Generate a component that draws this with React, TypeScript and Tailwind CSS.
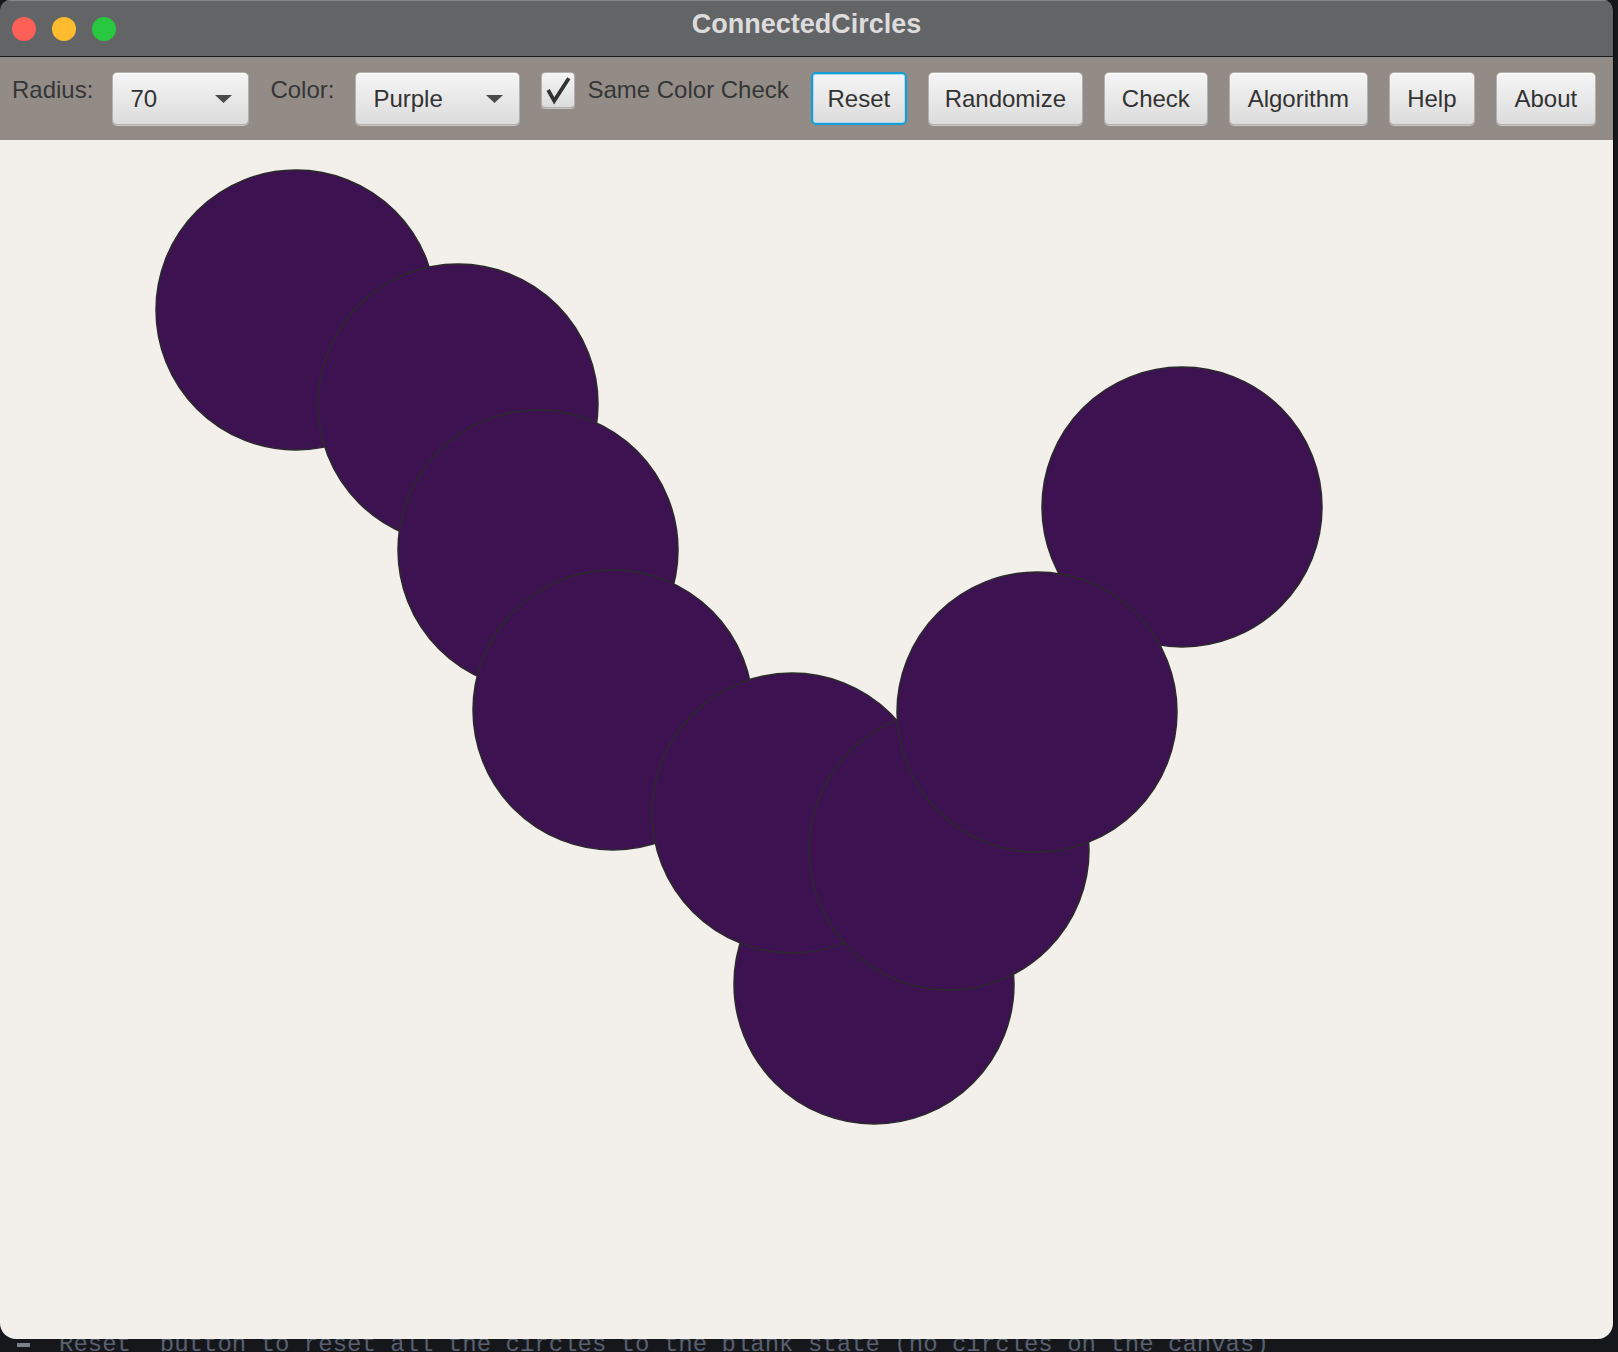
import React from 'react';

type Circle = { x: number; y: number };

// centres in canvas coordinates (canvas starts 140px below the window top)
const CIRCLES: Circle[] = [
  { x: 296, y: 170 },
  { x: 458, y: 264 },
  { x: 538, y: 410 },
  { x: 613, y: 570 },
  { x: 874, y: 844 },
  { x: 792, y: 673 },
  { x: 1182, y: 367 },
  { x: 949, y: 710 },
  { x: 1037, y: 572 },
];

const BUTTONS = [
  { label: 'Reset', width: 'w-[96px]', focused: true },
  { label: 'Randomize', width: 'w-[155px]' },
  { label: 'Check', width: 'w-[104px]' },
  { label: 'Algorithm', width: 'w-[139px]' },
  { label: 'Help', width: 'w-[86px]' },
  { label: 'About', width: 'w-[100px]' },
];

const Caret = () => (
  <svg width="17" height="8" viewBox="0 0 17 8" className="shrink-0">
    <path d="M0 0 L17 0 L8.5 8 Z" fill="#4a4a4a" />
  </svg>
);

const Combo = ({ value, width }: { value: string; width: string }) => (
  <div
    className={`${width} h-[53px] flex items-center justify-between pl-[17px] pr-[16px] rounded-[5px] border border-[#b3b0ad] bg-gradient-to-b from-[#f5f5f5] to-[#dcdcdc] shadow-[0_1px_0_#c9c5c1,inset_0_1px_0_#ffffff]`}
  >
    <span className="leading-[28px] text-[#333333]">{value}</span>
    <Caret />
  </div>
);

const Button = ({ label, width, focused }: { label: string; width: string; focused?: boolean }) => (
  <button
    type="button"
    className={`${width} h-[53px] flex items-center justify-center rounded-[5px] leading-[28px] text-[#333333] bg-gradient-to-b from-[#f5f5f5] to-[#dcdcdc] ${
      focused
        ? 'border-2 border-[#139fd6] shadow-[inset_0_0_0_1px_#a8d9ee]'
        : 'border border-[#b3b0ad] shadow-[0_1px_0_#c9c5c1,inset_0_1px_0_#ffffff]'
    }`}
  >
    {label}
  </button>
);

const Checkbox = () => (
  <div className="w-[34px] h-[36px] rounded-[4px] border border-[#b3b0ad] bg-gradient-to-b from-[#f5f5f5] to-[#dcdcdc] shadow-[0_1px_0_#c9c5c1] flex items-center justify-center">
    <svg width="34" height="36" viewBox="0 0 34 36">
      <path d="M6.5 18 L13 29.5 L28.5 5.5" fill="none" stroke="#333333" strokeWidth="4" strokeLinejoin="miter" />
    </svg>
  </div>
);

const App = () => {
  return (
    <div className="w-[1618px] h-[1352px] bg-[#15171b] overflow-hidden font-['Liberation_Sans',Arial,sans-serif]">
      <div className="relative z-10 w-[1614px] h-[1339px] flex flex-col rounded-t-[10px] rounded-b-[16px] overflow-hidden border-r border-[#0b0c0e]">
        {/* title bar */}
        <div className="relative h-[57px] shrink-0 flex items-center bg-[#636466] border-t border-[#858688] border-b border-b-[#1c1c1c]">
          <div className="flex items-center gap-[16px] pl-[12px]">
            <span className="w-[24px] h-[24px] rounded-full bg-[#fe5f57]" />
            <span className="w-[24px] h-[24px] rounded-full bg-[#febc2e]" />
            <span className="w-[24px] h-[24px] rounded-full bg-[#28c840]" />
          </div>
          <div className="absolute inset-0 flex items-center justify-center pb-[8px] pointer-events-none">
            <span className="text-[27px] font-bold text-[#dcdcdc] leading-none">ConnectedCircles</span>
          </div>
        </div>

        {/* toolbar */}
        <div className="h-[83px] shrink-0 bg-[#938c86] flex items-start pt-[15px] pl-[12px] text-[24px]">
          <span className="mt-[4px] leading-[28px] text-[#363636]">Radius:</span>
          <div className="ml-[19px]">
            <Combo value="70" width="w-[137px]" />
          </div>
          <span className="ml-[21px] mt-[4px] leading-[28px] text-[#363636]">Color:</span>
          <div className="ml-[21px]">
            <Combo value="Purple" width="w-[165px]" />
          </div>
          <div className="ml-[21px] flex items-start gap-[12px]">
            <Checkbox />
            <span className="mt-[4px] leading-[28px] text-[#363636]">Same Color Check</span>
          </div>
          <div className="ml-[22px] flex gap-[21px]">
            {BUTTONS.map((b) => (
              <Button key={b.label} label={b.label} width={b.width} focused={b.focused} />
            ))}
          </div>
        </div>

        {/* canvas */}
        <div className="flex-1 bg-[#f3f0eb]">
          <svg width="1614" height="1199" viewBox="0 0 1614 1199" className="block">
            {CIRCLES.map((c, i) => (
              <circle key={i} cx={c.x} cy={c.y} r={140} fill="#3d1251" stroke="#2a2a2a" strokeWidth="1.5" />
            ))}
          </svg>
        </div>
      </div>

      {/* what lies behind the window */}
      <div className="h-[13px] overflow-hidden flex items-start">
        <span className="ml-[17px] mt-[4px] w-[13px] h-[4px] bg-[#7c818b] shrink-0" />
        <span className="ml-[29px] -mt-[6px] whitespace-pre text-[24px] leading-[24px] text-[#596070] font-['Liberation_Mono',monospace]">
          Reset` button to reset all the circles to the blank state (no circles on the canvas)
        </span>
      </div>
    </div>
  );
};

export default App;
